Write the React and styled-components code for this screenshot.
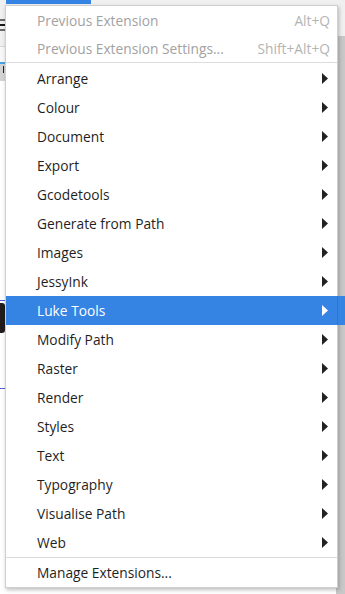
import React from "react"
import styled, { createGlobalStyle } from "styled-components"

const topItems = [
  { label: "Previous Extension", shortcut: "Alt+Q" },
  { label: "Previous Extension Settings...", shortcut: "Shift+Alt+Q" },
]

const subMenus = [
  "Arrange",
  "Colour",
  "Document",
  "Export",
  "Gcodetools",
  "Generate from Path",
  "Images",
  "JessyInk",
  "Luke Tools",
  "Modify Path",
  "Raster",
  "Render",
  "Styles",
  "Text",
  "Typography",
  "Visualise Path",
  "Web",
]

const ACTIVE = "Luke Tools"

export default function App() {
  return (
    <>
      <GlobalStyle />
      <Stage>
        <TopBar>
          <TabMark />
          <Burger>
            <span />
            <span />
            <span />
          </Burger>
        </TopBar>
        <Gap />
        <RulerRow>
          <RulerMark />
        </RulerRow>
        <Canvas>
          <Guide style={{ top: 219 }} />
          <Blob />
          <Guide style={{ top: 307 }} />
        </Canvas>
        <SideStrip />

        <Menu>
          {topItems.map((it) => (
            <Row key={it.label} $disabled $short>
              <Label>{it.label}</Label>
              <Shortcut>{it.shortcut}</Shortcut>
            </Row>
          ))}
          <Separator />
          {subMenus.map((name) => (
            <Row key={name} $active={name === ACTIVE}>
              <Label>{name}</Label>
              <Arrow viewBox="0 0 6 11" $active={name === ACTIVE}>
                <path d="M0 0 L6 5.5 L0 11 Z" />
              </Arrow>
            </Row>
          ))}
          <Separator $tight />
          <Row>
            <Label>Manage Extensions...</Label>
          </Row>
        </Menu>
      </Stage>
    </>
  )
}

const GlobalStyle = createGlobalStyle`
  html, body {
    margin: 0;
    padding: 0;
    background: #ffffff;
  }
  body {
    font-family: "Open Sans", "Noto Sans", sans-serif;
  }
`

const Stage = styled.div`
  position: relative;
  width: 345px;
  height: 594px;
  overflow: hidden;
  background: #ffffff;
  display: flex;
  flex-direction: column;
`

const TopBar = styled.div`
  position: relative;
  height: 46px;
  background: #f0f0f0;
  border-bottom: 1px solid #d6d6d6;
`

const TabMark = styled.div`
  position: absolute;
  left: 6px;
  top: 0;
  width: 85px;
  height: 4px;
  background: #3584e4;
`

const Burger = styled.div`
  position: absolute;
  left: -8px;
  top: 19px;
  display: flex;
  flex-direction: column;
  gap: 3px;

  span {
    display: block;
    width: 14px;
    height: 2px;
    background: #6a6a6a;
  }
  span:nth-child(2) {
    background: #1a1a1a;
  }
`

const Gap = styled.div`
  height: 15px;
  background: #f8f8f8;
`

const RulerRow = styled.div`
  position: relative;
  height: 17px;
  background: #d3d3d3;
  border-top: 2px solid #4aa3e6;
`

const RulerMark = styled.div`
  position: absolute;
  left: 3px;
  top: 2px;
  width: 1px;
  height: 7px;
  background: #222;
`

const Canvas = styled.div`
  position: relative;
  flex: 1;
  background: #ffffff;
`

const Guide = styled.div`
  position: absolute;
  left: 0;
  width: 6px;
  border-top: 1px dashed #5b5bd6;
`

const Blob = styled.div`
  position: absolute;
  left: -4px;
  top: 222px;
  width: 9px;
  height: 30px;
  background: #231c1c;
  border-radius: 3px;
`

const SideStrip = styled.div`
  position: absolute;
  right: 0;
  top: 36px;
  bottom: 0;
  width: 9px;
  background: #c8c8c8;
`

const Menu = styled.div`
  position: absolute;
  left: 5px;
  top: 5px;
  width: 331px;
  height: 581px;
  background: #ffffff;
  border: 1px solid #cfcfcf;
  box-shadow: 1px 2px 4px rgba(0, 0, 0, 0.25);
  display: flex;
  flex-direction: column;
`

const Row = styled.div`
  position: relative;
  height: ${(p) => (p.$short ? "28px" : "29px")};
  flex-shrink: 0;
  display: flex;
  align-items: center;
  justify-content: space-between;
  padding: 0 7px 0 31px;
  font-size: 13.75px;
  color: ${(p) => (p.$disabled ? "#a2a2a2" : p.$active ? "#ffffff" : "#1f1f1f")};
  background: ${(p) => (p.$active ? "#3584e4" : "transparent")};

  &::after {
    content: "";
    display: ${(p) => (p.$active ? "block" : "none")};
    position: absolute;
    left: 100%;
    top: 0;
    width: 10px;
    height: 100%;
    background: #3584e4;
    border-left: 1px solid #2f74c9;
  }
`

const Label = styled.span`
  white-space: nowrap;
`

const Shortcut = styled.span`
  color: #b4b4b4;
  white-space: nowrap;
`

const Arrow = styled.svg`
  width: 6px;
  height: 11px;
  margin-right: 2px;
  fill: ${(p) => (p.$active ? "#ffffff" : "#222222")};
`

const Separator = styled.div`
  flex-shrink: 0;
  height: 1px;
  margin: ${(p) => (p.$tight ? "0" : "0 0 1px")};
  background: #dcdcdc;
`
